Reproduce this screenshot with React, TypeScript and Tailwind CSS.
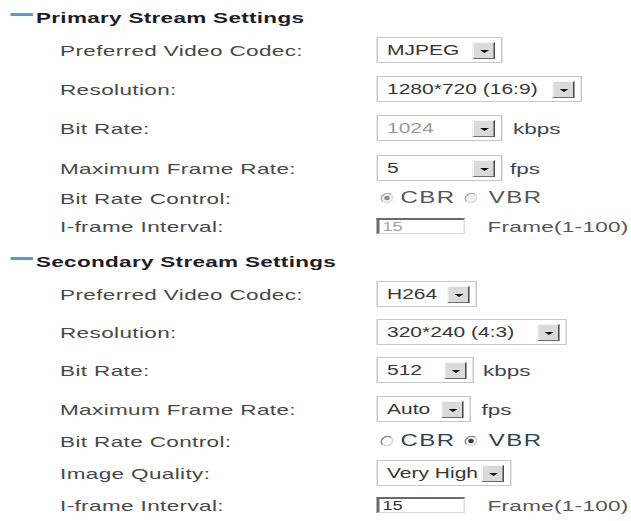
import React from "react";

type Tone = "dim" | "dark";

function DropButton() {
  return (
    <span className="flex h-[17px] w-[15px] shrink-0 items-center justify-center border border-t-[#f5f5f5] border-l-[#f5f5f5] border-b-[#6a6a6a] border-r-[#4a4a4a] bg-[#dadada]">
      <svg width="6" height="3" viewBox="0 0 6 3" className="mt-[2px]">
        <path d="M0 0h6L3 3z" fill="#111" />
      </svg>
    </span>
  );
}

function Select({ value, width, tone = "dark" }: { value: string; width: string; tone?: Tone }) {
  return (
    <div
      className={`flex h-[26px] shrink-0 items-center justify-between border border-[#c8c8c8] bg-white pl-[6px] pr-[4px] ${width}`}
    >
      <span className={`whitespace-pre text-[14px] leading-none ${tone === "dim" ? "text-[#9a9a9a]" : "text-[#363636]"}`}>
        {value}
      </span>
      <DropButton />
    </div>
  );
}

function Radio({ checked, tone }: { checked: boolean; tone: Tone }) {
  const dim = tone === "dim";
  return (
    <svg width="10" height="12" viewBox="0 0 12 12" preserveAspectRatio="none" className="shrink-0">
      <circle cx="6" cy="6" r="5" fill={dim ? "#f2f2f2" : "#fafafa"} />
      <path d="M2.5 9.5A5 5 0 0 1 9.5 2.5" fill="none" stroke={dim ? "#b0b0b0" : "#8a8a8a"} strokeWidth="1.4" />
      <path d="M9.5 2.5A5 5 0 0 1 2.5 9.5" fill="none" stroke={dim ? "#dedede" : "#d6d6d6"} strokeWidth="1.4" />
      {checked && <circle cx="6" cy="6" r="2.2" fill={dim ? "#8c8c8c" : "#3a3a3a"} />}
    </svg>
  );
}

function RateControl({ vbr, tone }: { vbr: boolean; tone: Tone }) {
  const text = tone === "dim" ? "text-[#555]" : "text-[#2f4352]";
  return (
    <div className="flex items-center pl-[2px]">
      <Radio checked={!vbr} tone={tone} />
      <span className={`ml-[4px] text-[16px] leading-none tracking-[1px] ${text}`}>CBR</span>
      <span className="ml-[5px] flex">
        <Radio checked={vbr} tone={tone} />
      </span>
      <span className={`ml-[7px] text-[16px] leading-none tracking-[1px] ${text}`}>VBR</span>
    </div>
  );
}

function IntervalInput({ tone }: { tone: Tone }) {
  return (
    <div className="flex items-center">
      <div className="flex h-[16px] w-[59px] items-center border-t-2 border-l-2 border-r border-b border-t-[#6b6b6b] border-l-[#6b6b6b] border-r-[#dcdcdc] border-b-[#dcdcdc] bg-white pl-[2px]">
        <span className={`text-[12px] leading-none ${tone === "dim" ? "text-[#a0a0a0]" : "text-[#333]"}`}>15</span>
      </div>
      <span className="ml-[15px] text-[15px] leading-none tracking-[0.2px] text-[#555]">Frame(1-100)</span>
    </div>
  );
}

function Unit({ children, gap }: { children: React.ReactNode; gap: string }) {
  return <span className={`text-[15px] leading-none text-[#3d4650] ${gap}`}>{children}</span>;
}

function Row({ label, spacing, children }: { label: string; spacing: string; children: React.ReactNode }) {
  return (
    <div className={`flex h-[26px] items-center pl-[40px] ${spacing}`}>
      <span className="w-[211px] shrink-0 text-[15px] leading-none tracking-[0.25px] text-[#484848]">{label}</span>
      <div className="flex items-center">{children}</div>
    </div>
  );
}

function SectionTitle({ title, spacing }: { title: string; spacing: string }) {
  return (
    <div className={`flex h-[26px] items-center pl-[7px] ${spacing}`}>
      <span className="mb-[5px] h-[3px] w-[15px] bg-[#5b9bc9]" />
      <span className="ml-[2px] text-[15px] font-bold leading-none tracking-[0.2px] text-[#1d1c28]">{title}</span>
    </div>
  );
}

export default function App() {
  return (
    <div className="h-[521px] w-[631px] overflow-hidden bg-white font-['Liberation_Sans',Arial,sans-serif]">
      <div className="flex w-[421px] origin-top-left scale-x-150 flex-col pt-[4px]">
        <SectionTitle title="Primary Stream Settings" spacing="" />
        <Row label="Preferred Video Codec:" spacing="mt-[7px]">
          <Select value="MJPEG" width="w-[84px]" />
        </Row>
        <Row label="Resolution:" spacing="mt-[13px]">
          <Select value="1280*720 (16:9)" width="w-[137px]" />
        </Row>
        <Row label="Bit Rate:" spacing="mt-[13px]">
          <Select value="1024" width="w-[84px]" tone="dim" />
          <Unit gap="ml-[7px]">kbps</Unit>
        </Row>
        <Row label="Maximum Frame Rate:" spacing="mt-[14px]">
          <Select value="5" width="w-[84px]" />
          <Unit gap="ml-[5px]">fps</Unit>
        </Row>
        <Row label="Bit Rate Control:" spacing="mt-[4px]">
          <RateControl vbr={false} tone="dim" />
        </Row>
        <Row label="I-frame Interval:" spacing="mt-[2px]">
          <IntervalInput tone="dim" />
        </Row>

        <SectionTitle title="Secondary Stream Settings" spacing="mt-[9px]" />
        <Row label="Preferred Video Codec:" spacing="mt-[7px]">
          <Select value="H264" width="w-[67px]" />
        </Row>
        <Row label="Resolution:" spacing="mt-[12px]">
          <Select value="320*240 (4:3)" width="w-[127px]" />
        </Row>
        <Row label="Bit Rate:" spacing="mt-[12px]">
          <Select value="512" width="w-[65px]" />
          <Unit gap="ml-[6px]">kbps</Unit>
        </Row>
        <Row label="Maximum Frame Rate:" spacing="mt-[13px]">
          <Select value="Auto" width="w-[63px]" />
          <Unit gap="ml-[7px]">fps</Unit>
        </Row>
        <Row label="Bit Rate Control:" spacing="mt-[6px]">
          <RateControl vbr tone="dark" />
        </Row>
        <Row label="Image Quality:" spacing="mt-[6px]">
          <Select value="Very High" width="w-[90px]" />
        </Row>
        <Row label="I-frame Interval:" spacing="mt-[6px]">
          <IntervalInput tone="dark" />
        </Row>
      </div>
    </div>
  );
}
